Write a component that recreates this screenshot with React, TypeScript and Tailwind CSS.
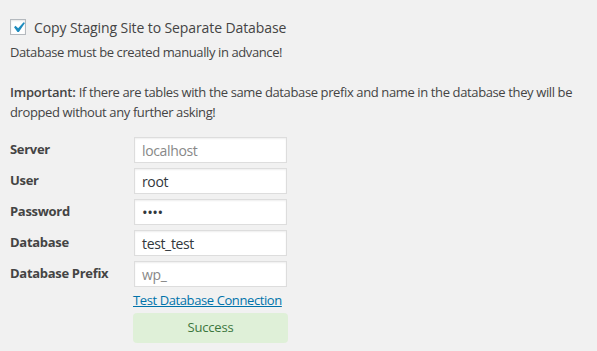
import React from "react";

const rows: { label: string; value: string; muted?: boolean; password?: boolean }[] = [
  { label: "Server", value: "localhost", muted: true },
  { label: "User", value: "root" },
  { label: "Password", value: "••••", password: true },
  { label: "Database", value: "test_test" },
  { label: "Database Prefix", value: "wp_", muted: true },
];

export default function App() {
  return (
    <div className="w-[597px] h-[351px] bg-[#f1f1f1] pl-[10px] pt-[19px] text-[#444] font-['Open_Sans',sans-serif] overflow-hidden">
      <div className="flex items-center gap-[8px] h-[16px]">
        <div className="relative w-[16px] h-[16px] shrink-0 bg-white border border-[#b4b9be] shadow-[inset_0_1px_2px_rgba(0,0,0,0.1)]">
          <svg className="absolute left-[-3px] top-[-3px]" width="21" height="21" viewBox="0 0 20 20">
            <path d="M14.83 4.89l1.34.94-5.81 8.38H9.02L5.78 9.67l1.34-1.25 2.57 2.4z" fill="#1e8cbe" />
          </svg>
        </div>
        <span className="text-[14px] leading-[20px] tracking-[-0.1px] mt-[2px]">Copy Staging Site to Separate Database</span>
      </div>
      <p className="mt-[7px] text-[13px] leading-[20px] tracking-[-0.4px]">Database must be created manually in advance!</p>
      <p className="mt-[20px] text-[13px] leading-[20px] tracking-[-0.38px] w-[575px]">
        <strong className="font-semibold tracking-[-0.2px]">Important:</strong>{" "}If there are tables with the same database prefix and name in the database they will be dropped without any further asking!
      </p>
      <div className="mt-[15px] flex flex-col gap-[5px]">
        {rows.map((r) => (
          <div key={r.label} className="flex items-center h-[26px]">
            <div className="w-[124px] text-[13px] font-bold tracking-[-0.3px]">{r.label}</div>
            <div className="w-[153px] h-[26px] bg-white border border-[#ddd] shadow-[inset_0_1px_2px_rgba(0,0,0,0.07)] flex items-center px-[7px] text-[14px] tracking-[-0.35px]">
              <span
                className={
                  r.muted
                    ? "text-[#888]"
                    : r.password
                    ? "text-[#32373c] text-[15px] tracking-[-0.5px]"
                    : "text-[#32373c]"
                }
              >
                {r.value}
              </span>
            </div>
          </div>
        ))}
      </div>
      <div className="ml-[123px] mt-[3px] h-[20px] text-[13px] leading-[20px] tracking-[-0.4px]">
        <a className="text-[#0073aa] underline" href="#">Test Database Connection</a>
      </div>
      <div className="ml-[123px] mt-[3px] w-[155px] h-[30px] rounded-[4px] bg-[#dff0d8] text-[#3c763d] text-[13px] flex items-center justify-center tracking-[-0.2px]">
        Success
      </div>
    </div>
  );
}
